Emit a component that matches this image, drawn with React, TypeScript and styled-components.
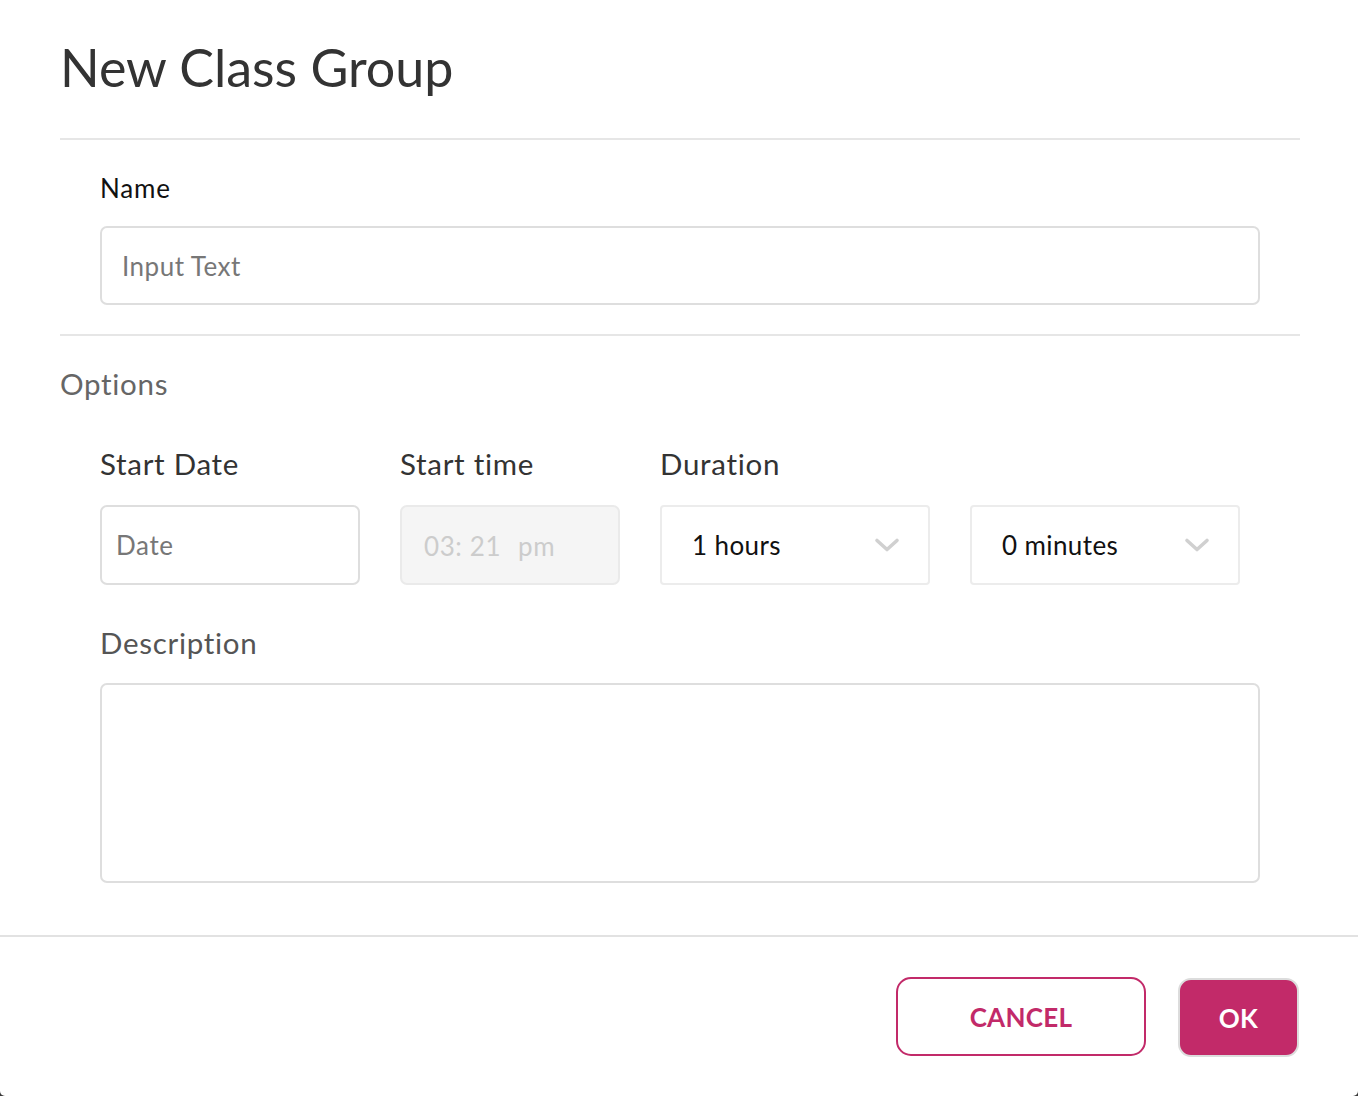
import React from "react";
import styled, { createGlobalStyle } from "styled-components";

const Global = createGlobalStyle`
  html, body { margin: 0; padding: 0; background: #3a3a3a; }
  body { font-family: Lato, "Open Sans", "Noto Sans", sans-serif; }
  * { box-sizing: border-box; }
`;

const PINK = "#c22a69";

const Modal = styled.div`
  width: 1358px;
  height: 1096px;
  background: #fff;
  border-radius: 0 0 5px 5px;
  display: flex;
  flex-direction: column;
`;

const Header = styled.div`
  margin: 0 58px 0 60px;
  height: 140px;
  border-bottom: 2px solid #e6e6e6;
  display: flex;
  align-items: center;
  padding-bottom: 4px;
`;

const Title = styled.h1`
  margin: 0;
  font-size: 52px;
  font-weight: 400;
  line-height: 1;
  color: #333;
`;

const Body = styled.div`
  margin: 0 58px 0 60px;
  flex: 0 0 auto;
  height: 795px;
`;

const NameSection = styled.div`
  height: 196px;
  border-bottom: 2px solid #e6e6e6;
  padding: 33px 40px 0;
`;

const Label = styled.div<{ $tone?: string }>`
  font-size: ${(p) => (p.$tone === "small" ? "26px" : "29.5px")};
  line-height: ${(p) => (p.$tone === "small" ? "30px" : "34px")};
  letter-spacing: ${(p) => (p.$tone === "small" ? "0.8px" : "0.7px")};
  color: ${(p) => (p.$tone === "small" ? "#111" : p.$tone || "#333")};
`;

const TextInput = styled.div<{ $height: number }>`
  margin-top: 23px;
  height: ${(p) => p.$height}px;
  border: 2px solid #dedede;
  border-radius: 7px;
  display: flex;
  align-items: ${(p) => (p.$height > 100 ? "flex-start" : "center")};
  padding: 0 20px;
  font-size: 26px;
  letter-spacing: 0.5px;
  color: #777;
`;

const OptionsTitle = styled.div`
  margin-top: 31px;
  font-size: 29.5px;
  line-height: 34px;
  letter-spacing: 0.7px;
  color: #666;
`;

const OptionsInner = styled.div`
  padding: 0 40px;
`;

const FieldGrid = styled.div`
  margin-top: 46px;
  display: grid;
  grid-template-columns: 260px 220px 270px 270px;
  column-gap: 40px;
  row-gap: 24px;
`;

const Box = styled.div<{ $variant: "date" | "time" | "select" }>`
  height: 80px;
  border-radius: ${(p) => (p.$variant === "select" ? "4px" : "7px")};
  border: 2px solid
    ${(p) => (p.$variant === "date" ? "#dedede" : p.$variant === "time" ? "#eaeaea" : "#ececec")};
  background: ${(p) => (p.$variant === "time" ? "#f5f5f5" : "#fff")};
  display: flex;
  align-items: center;
  justify-content: space-between;
  padding: ${(p) =>
    p.$variant === "date" ? "0 14px" : p.$variant === "time" ? "2px 22px 0" : "0 28px 0 30px"};
  font-size: 26px;
  letter-spacing: ${(p) => (p.$variant === "select" ? "0.4px" : "0.6px")};
  color: ${(p) => (p.$variant === "date" ? "#777" : p.$variant === "time" ? "#ccc" : "#111")};
`;

const TimeWrap = styled.span`
  display: flex;
  gap: 17px;
`;

const DescLabel = styled.div`
  margin-top: 41px;
  font-size: 29.5px;
  line-height: 34px;
  letter-spacing: 0.7px;
  color: #555;
`;

const Footer = styled.div`
  border-top: 2px solid #e2e2e2;
  flex: 1;
  display: flex;
  justify-content: flex-end;
  align-items: flex-start;
  gap: 32px;
  padding: 40px 59px 0 0;
`;

const Button = styled.button<{ $primary?: boolean }>`
  height: 79px;
  width: ${(p) => (p.$primary ? "121px" : "250px")};
  border-radius: ${(p) => (p.$primary ? "13px" : "15px")};
  border: 2px solid ${(p) => (p.$primary ? "#dcdcdc" : PINK)};
  background: ${(p) => (p.$primary ? PINK : "#fff")};
  color: ${(p) => (p.$primary ? "#fff" : PINK)};
  font-family: Lato, "Open Sans", sans-serif;
  font-weight: 700;
  font-size: 26px;
  letter-spacing: 0.3px;
  padding: 0;
  margin-top: ${(p) => (p.$primary ? "1px" : "0")};
  cursor: pointer;
`;

const Chevron = () => (
  <svg width="26" height="16" viewBox="0 0 26 16" fill="none">
    <path d="M3 3.5 L13 12.5 L23 3.5" stroke="#d0d0d0" strokeWidth="3.6" strokeLinecap="round" strokeLinejoin="round" />
  </svg>
);

export default function App() {
  return (
    <Modal>
      <Global />
      <Header>
        <Title>New Class Group</Title>
      </Header>
      <Body>
        <NameSection>
          <Label $tone="small">Name</Label>
          <TextInput $height={79}>Input Text</TextInput>
        </NameSection>
        <OptionsTitle>Options</OptionsTitle>
        <OptionsInner>
          <FieldGrid>
            <Label>Start Date</Label>
            <Label>Start time</Label>
            <Label>Duration</Label>
            <div />
            <Box $variant="date">Date</Box>
            <Box $variant="time">
              <TimeWrap>
                <span>03: 21</span>
                <span>pm</span>
              </TimeWrap>
            </Box>
            <Box $variant="select">
              <span>1 hours</span>
              <Chevron />
            </Box>
            <Box $variant="select">
              <span>0 minutes</span>
              <Chevron />
            </Box>
          </FieldGrid>
          <DescLabel>Description</DescLabel>
          <TextInput $height={200} />
        </OptionsInner>
      </Body>
      <Footer>
        <Button>CANCEL</Button>
        <Button $primary>OK</Button>
      </Footer>
    </Modal>
  );
}
